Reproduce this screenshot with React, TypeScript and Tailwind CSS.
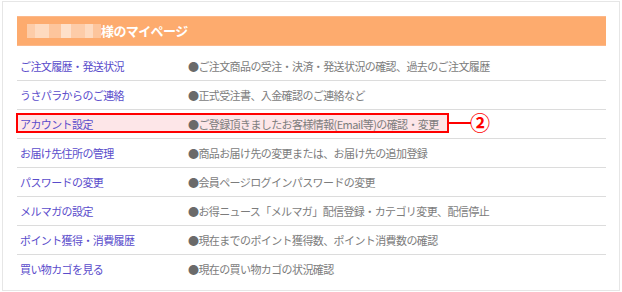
const rows = [
  { label: "ご注文履歴・発送状況", desc: "ご注文商品の受注・決済・発送状況の確認、過去のご注文履歴" },
  { label: "うさパラからのご連絡", desc: "正式受注書、入金確認のご連絡など" },
  { label: "アカウント設定", desc: "ご登録頂きましたお客様情報(Email等)の確認・変更", mark: true },
  { label: "お届け先住所の管理", desc: "商品お届け先の変更または、お届け先の追加登録" },
  { label: "パスワードの変更", desc: "会員ページログインパスワードの変更" },
  { label: "メルマガの設定", desc: "お得ニュース「メルマガ」配信登録・カテゴリ変更、配信停止" },
  { label: "ポイント獲得・消費履歴", desc: "現在までのポイント獲得数、ポイント消費数の確認" },
  { label: "買い物カゴを見る", desc: "現在の買い物カゴの状況確認" },
];

export default function App() {
  return (
    <div
      className="w-[622px] h-[292px] bg-white pt-px pl-[2px] pr-[2px]"
      style={{ fontFamily: '"Noto Sans CJK JP", "Noto Sans", sans-serif' }}
    >
      <div className="h-[290px] border border-[#e6e6e6] pt-[14px] pl-[14px] pr-[13px]">
        <div className="h-[30px] bg-[#fdab6e] border-y border-[#fcb88a] flex items-center pl-[10px]">
          <div className="flex items-center h-[16px] opacity-80">
            <span className="w-[8px] h-[14px] bg-white/50" />
            <span className="w-[14px] h-[14px] bg-white/70" />
            <span className="w-[12px] h-[14px] bg-white/40" />
            <span className="w-[10px] h-[14px] bg-white/80" />
            <span className="w-[14px] h-[14px] bg-white/50" />
            <span className="w-[8px] h-[14px] bg-white/70" />
            <span className="w-[8px] h-[14px] bg-white/40" />
          </div>
          <span className="text-white font-bold text-[13px] tracking-[-0.6px]">
            様のマイページ
          </span>
        </div>
        <div className="mt-[6px]">
          {rows.map((r, i) => (
            <div
              key={i}
              className={`relative grid grid-cols-[171px_1fr] items-center h-[29px] ${
                i < rows.length - 1 ? "border-b border-[#dcdcdc]" : ""
              }`}
            >
              {r.mark && (
                <>
                  <div className="absolute left-[-1px] top-[3px] w-[433px] h-[20px] border-2 border-[#ff0000] bg-[#fde6e8]" />
                  <div className="absolute left-[432px] top-[12px] w-[22px] h-[2px] bg-[#ff0000]" />
                  <span className="absolute left-[453px] top-0 text-[#ff0000] text-[20px] leading-[25px] font-bold">
                    ②
                  </span>
                </>
              )}
              <span className="relative pl-[3px] text-[#5a4ccb] text-[11px] tracking-[-0.6px]">
                {r.label}
              </span>
              <span className="relative text-[#7c7c7c] text-[11px] tracking-[-0.6px]">
                <span className="text-[#6a6a6a]">●</span>
                {r.desc}
              </span>
            </div>
          ))}
        </div>
      </div>
    </div>
  );
}
